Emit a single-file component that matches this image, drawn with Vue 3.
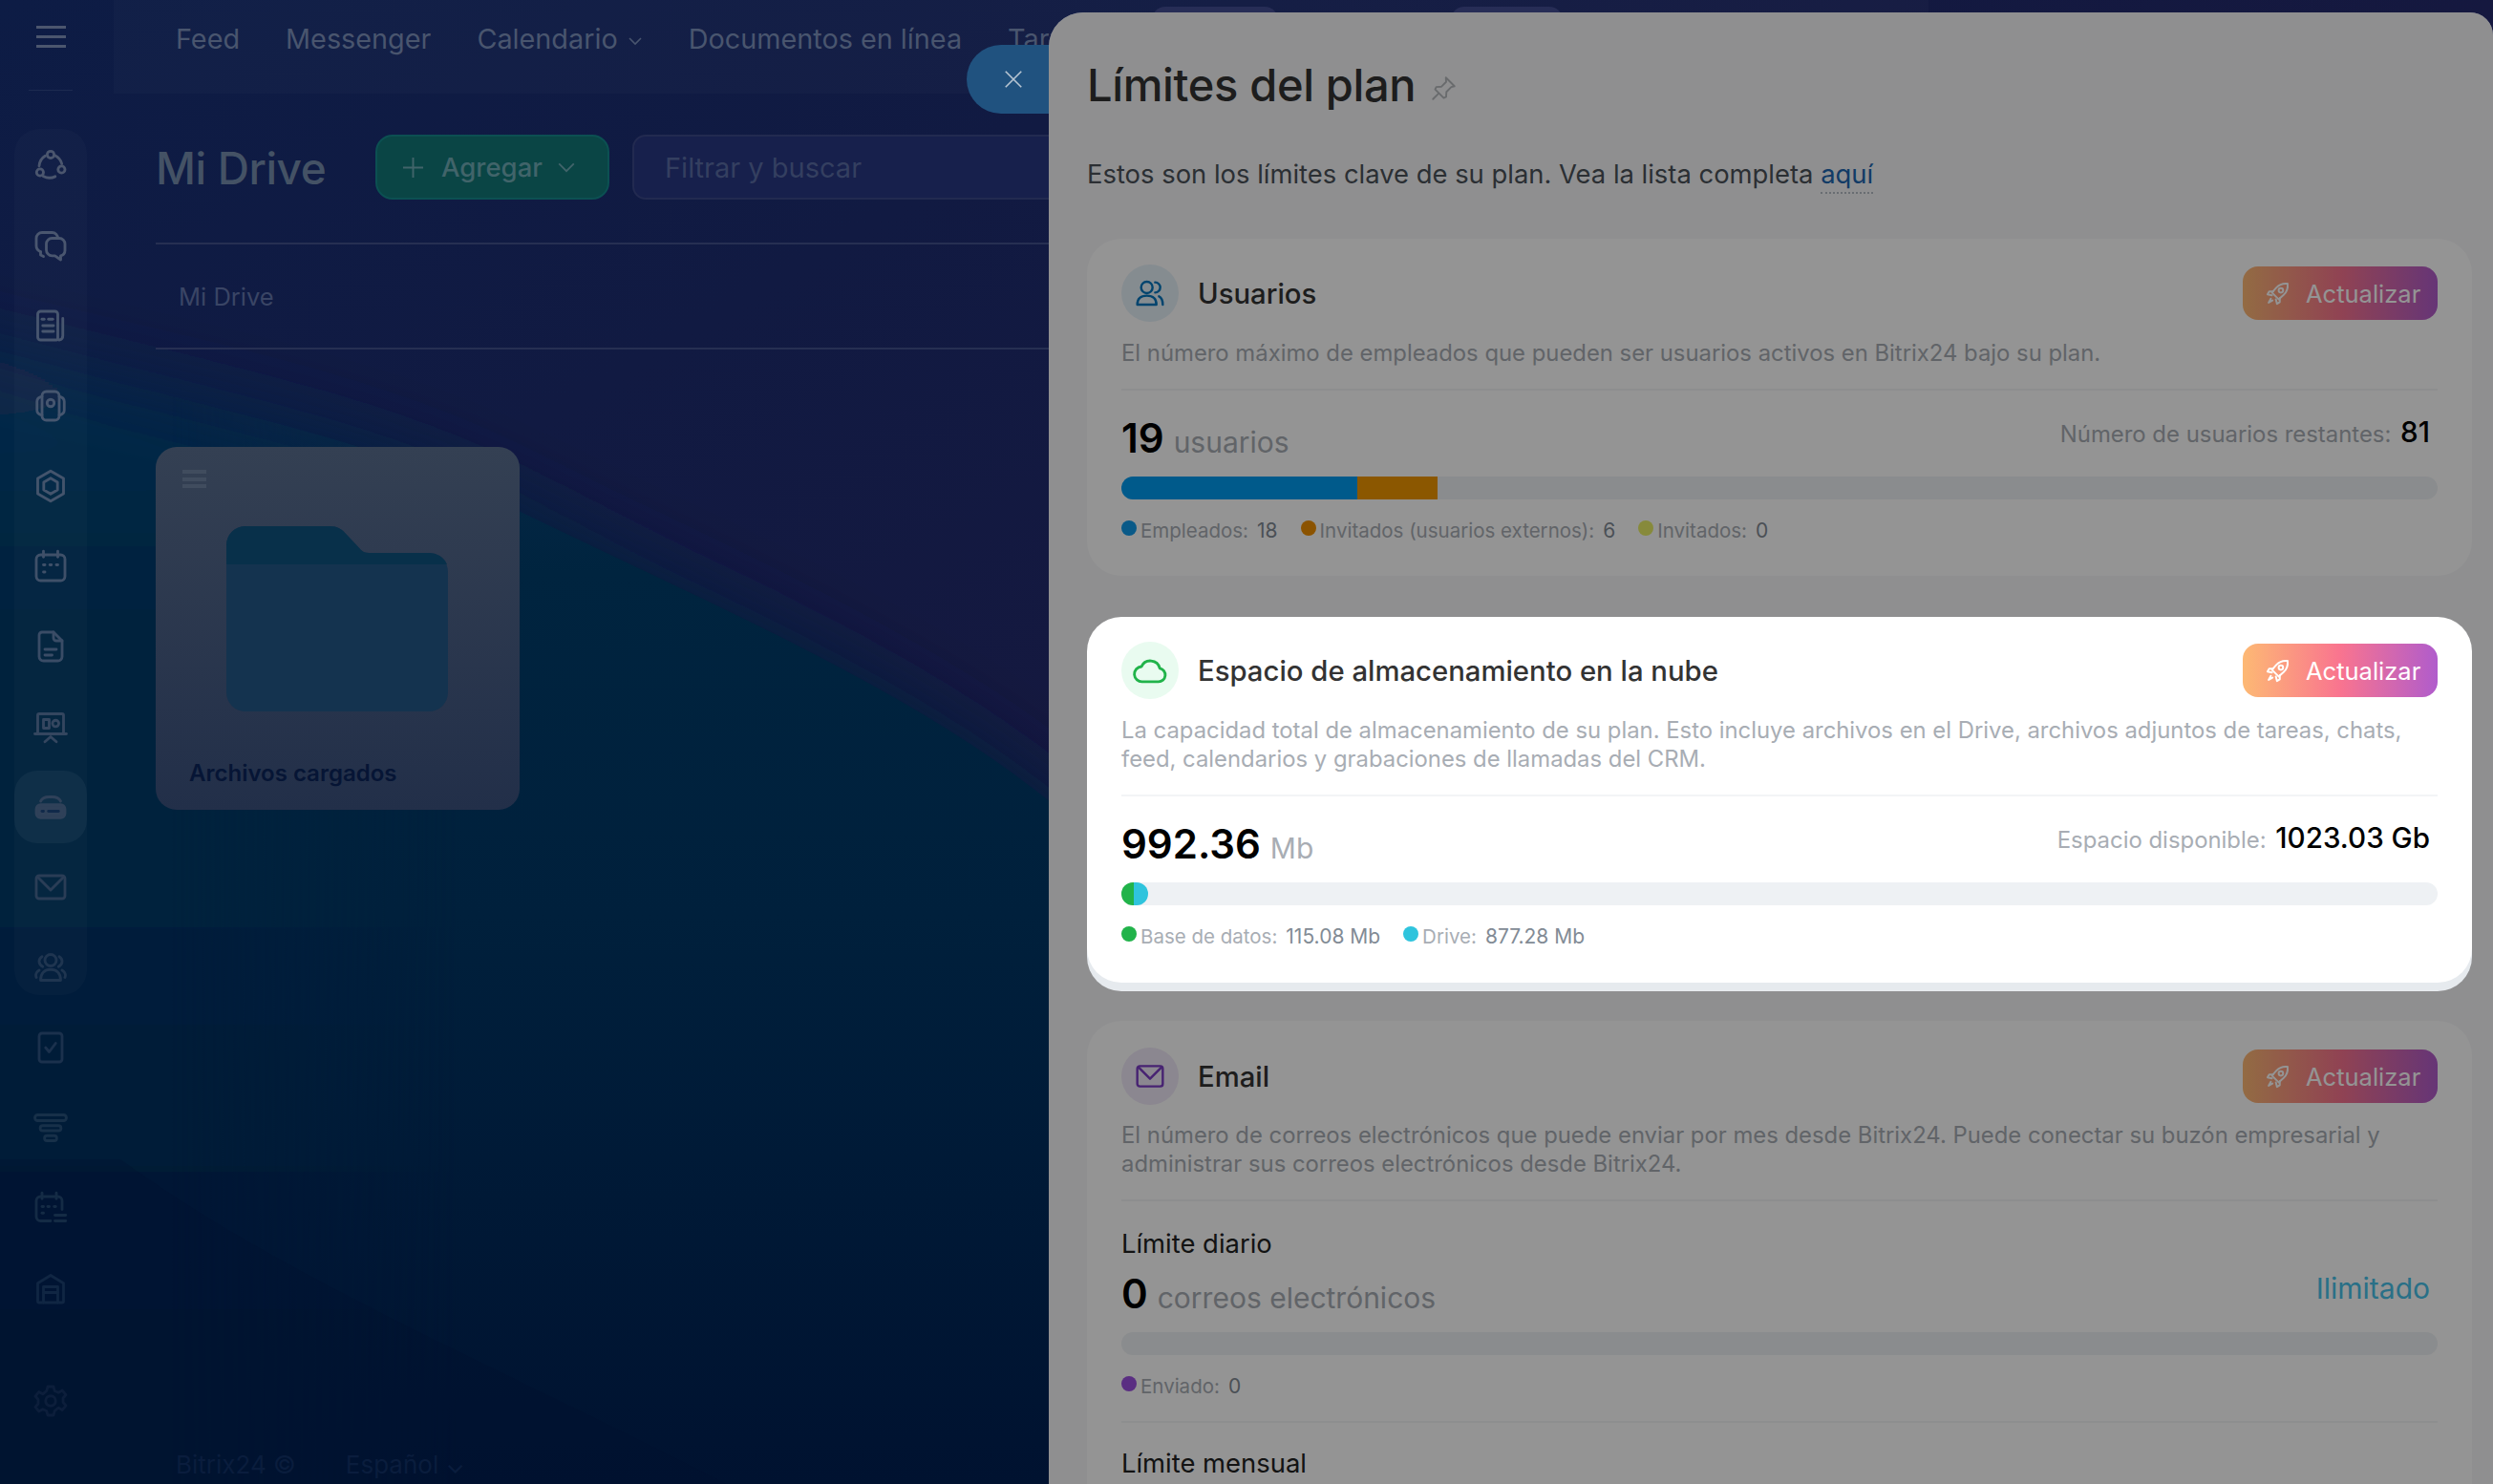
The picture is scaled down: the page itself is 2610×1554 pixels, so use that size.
<script setup>
const railTop = [
  ['M8.2 5.5A9 9 0 0 0 4 12.5', 'M6.8 19.6a9 9 0 0 0 8.4.3', 'M19.8 11A9 9 0 0 0 15 5.2', 'M12 2.2a2.4 2.4 0 1 0 0 4.8 2.4 2.4 0 0 0 0-4.8z', 'M4.6 14.6a2.4 2.4 0 1 0 0 4.8 2.4 2.4 0 0 0 0-4.8z', 'M19.6 12.6a2.4 2.4 0 1 0 0 4.8 2.4 2.4 0 0 0 0-4.8z'],
  ['M5 16.5c-1.6-.8-3-2-3-4.2V7a4 4 0 0 1 4-4h7a4 4 0 0 1 4 4', 'M5 16.5v2.2l2 1', 'M13 7h5a4 4 0 0 1 4 4v4.5a4 4 0 0 1-3 3.8V22l-4-2.8h-2a4 4 0 0 1-4-4V11a4 4 0 0 1 4-4z'],
  ['M5 2h10a2 2 0 0 1 2 2v17a1 1 0 0 1-1 1H5a2 2 0 0 1-2-2V4a2 2 0 0 1 2-2z', 'M20.5 7v12a3 3 0 0 1-2.500 3', 'M6 7.500h1.500', 'M10.500 7.500h3', 'M6.500 12h7.500', 'M6.500 16h7.500'],
  ['M9 2h6a3 3 0 0 1 3 3v14a3 3 0 0 1-3 3H9a3 3 0 0 1-3-3V5a3 3 0 0 1 3-3z', 'M12 7.500a2.500 2.500 0 1 0 0 5 2.500 2.500 0 0 0 0-5z', 'M6 5.500c-2 .4-3.500 1.500-3.500 3.500v6c0 2 1.500 3.100 3.500 3.500', 'M18 5.500c2 .4 3.500 1.500 3.500 3.500v6c0 2-1.500 3.100-3.500 3.500'],
  ['M12 1.500l9 5.200v10.600l-9 5.200-9-5.200V6.700z', 'M12 6.500l4.800 2.800v5.400L12 17.500l-4.800-2.800V9.300z'],
  ['M5 4h14a3 3 0 0 1 3 3v12a3 3 0 0 1-3 3H5a3 3 0 0 1-3-3V7a3 3 0 0 1 3-3z', 'M7 1.500v4', 'M17 1.500v4', 'M7 11h1', 'M11.500 11h1', 'M16 11h1', 'M7 16h1'],
  ['M6 2h8l6 6v11a3 3 0 0 1-3 3H7a3 3 0 0 1-3-3V4a2 2 0 0 1 2-2z', 'M14 2v4a2 2 0 0 0 2 2h4', 'M8 14h8', 'M8 18h5'],
  ['M4 3h16a1 1 0 0 1 1 1v13H3V4a1 1 0 0 1 1-1z', 'M1 17h22', 'M7 7h4v6H7z', 'M15.500 7.500a2.200 2.200 0 1 0 0 4.400 2.200 2.200 0 0 0 0-4.400z', 'M8 22.500l4-3.500 4 3.500'],
  ['M5 8c1-2 3-3 6-3h2c3 0 5 1 6 3', 'M5 10.500h14a3 3 0 0 1 3 3v3a3 3 0 0 1-3 3H5a3 3 0 0 1-3-3v-3a3 3 0 0 1 3-3z', 'M6 15h1', 'M10.500 15h7'],
  ['M4 4h16a2 2 0 0 1 2 2v12a2 2 0 0 1-2 2H4a2 2 0 0 1-2-2V6a2 2 0 0 1 2-2z', 'M3 5l9 9 9-9'],
  ['M12 3a4 4 0 1 0 0 8 4 4 0 0 0 0-8z', 'M5 21c0-5 3-7.500 7-7.500s7 2.500 7 7.500z', 'M6 4.500c-2.500 1.500-3 5 .5 7', 'M18 4.500c2.500 1.500 3 5-.5 7', 'M2 19c-.8-2 .2-4 2-5', 'M22 19c.8-2-.2-4-2-5']
]
const railBottom = [
  ['M6 2h12a2 2 0 0 1 2 2v16a2 2 0 0 1-2 2H6a2 2 0 0 1-2-2V4a2 2 0 0 1 2-2z', 'M8.500 12l2.500 3 4.500-6'],
  ['M3 3h18a1.500 1.500 0 0 1 0 4H3a1.500 1.500 0 0 1 0-4z', 'M6.500 10.500h11a1.500 1.500 0 0 1 0 3.500h-11a1.500 1.500 0 0 1 0-3.500z', 'M9.500 17.500h5a1.700 1.700 0 0 1 0 3.500h-5a1.700 1.700 0 0 1 0-3.500z'],
  ['M12 21H5a3 3 0 0 1-3-3V7a3 3 0 0 1 3-3h12a3 3 0 0 1 3 3v6', 'M6 1.500v4', 'M16 1.500v4', 'M6 11h1', 'M10 11h1', 'M14.500 11h1', 'M6 15.500h1', 'M15 17h7.500', 'M15 21h7.500'],
  ['M3 21V8.500L12 3l9 5.500V21a1 1 0 0 1-1 1H4a1 1 0 0 1-1-1z', 'M7 22V11h10v11', 'M7 15h10'],
  ['M10 2h4l.8 3 2.700 1.200 2.700-1.500 2.500 3-2 2.300v3l2 2.300-2.500 3-2.700-1.500L14.800 19 14 22h-4l-.8-3-2.700-1.200-2.700 1.500-2.500-3 2-2.300v-3l-2-2.300 2.500-3 2.700 1.500L9.200 5z', 'M12 8.500a3.500 3.500 0 1 0 0 7 3.500 3.500 0 0 0 0-7z']
]
const railColor = (i) => {
  const stops = ['#4b566e', '#4a566f', '#48566f', '#46566f', '#44546c', '#3f5069', '#3a4c66', '#34465f', '#2f4159', '#2a3d56', '#1f3550', '#1b314d', '#173049', '#142b45', '#102643', '#0c1e3b']
  return { color: stops[i] }
}
const driveFill = (iconIndex, pathIndex) => (iconIndex === 8 && pathIndex === 1 ? 'currentColor' : 'none')
const driveStroke = (iconIndex, pathIndex) => (iconIndex === 8 && pathIndex > 1 ? '#10294a' : 'currentColor')
const rocket = ['M20.500 3.500c-4-.5-7.500.8-10 3.500L6.500 11.500l6 6 4.500-4c2.700-2.500 4-6 3.500-10z', 'M14.500 7.500a2 2 0 1 0 0 4 2 2 0 0 0 0-4z', 'M7.500 10.500H4L2.500 13l4 1', 'M13.500 16.500v3.500L11 21.500l-1-4', 'M5.500 17l-2 3.500 3.500-2']
const cards = [
  {
    title: 'Usuarios', tint: 'tint-blue', iconPaths: ['M9.500 3a4.500 4.500 0 1 0 0 9 4.500 4.500 0 0 0 0-9z', 'M2 21c0-5 3-7 7.500-7s7.500 2 7.500 7z', 'M16 3.500a4 4 0 0 1 0 8', 'M19 14.500c2 1 3 3 3 6.500'],
    desc: 'El número máximo de empleados que pueden ser usuarios activos en Bitrix24 bajo su plan.',
    sections: [{ value: '19', unit: 'usuarios', rightLabel: 'Número de usuarios restantes:', rightValue: '81', segs: [{ w: 247, c: '#009bf0' }, { w: 84, c: '#f09600' }], legend: [{ c: '#129bea', l: 'Empleados:', v: '18' }, { c: '#f09000', l: 'Invitados (usuarios externos):', v: '6' }, { c: '#e8ee66', l: 'Invitados:', v: '0' }] }]
  },
  {
    title: 'Espacio de almacenamiento en la nube', tint: 'tint-green', highlight: true, iconPaths: ['M7 19.500h10.500a4.500 4.500 0 0 0 1-8.900A6.500 6.500 0 0 0 6.300 9.500 5 5 0 0 0 7 19.500z'],
    desc: 'La capacidad total de almacenamiento de su plan. Esto incluye archivos en el Drive, archivos adjuntos de tareas, chats, feed, calendarios y grabaciones de llamadas del CRM.',
    sections: [{ value: '992.36', unit: 'Mb', rightLabel: 'Espacio disponible:', rightValue: '1023.03 Gb', segs: [{ w: 13, c: '#21b34a' }, { w: 15, c: '#2fc4dd' }], legend: [{ c: '#21b34a', l: 'Base de datos:', v: '115.08 Mb' }, { c: '#2fc4dd', l: 'Drive:', v: '877.28 Mb' }] }]
  },
  {
    title: 'Email', tint: 'tint-purple', iconPaths: ['M4 4h16a2 2 0 0 1 2 2v12a2 2 0 0 1-2 2H4a2 2 0 0 1-2-2V6a2 2 0 0 1 2-2z', 'M3 5l9 9 9-9'],
    desc: 'El número de correos electrónicos que puede enviar por mes desde Bitrix24. Puede conectar su buzón empresarial y administrar sus correos electrónicos desde Bitrix24.',
    sections: [
      { heading: 'Límite diario', value: '0', unit: 'correos electrónicos', unlimited: 'Ilimitado', segs: [], legend: [{ c: '#9b50e0', l: 'Enviado:', v: '0' }] },
      { heading: 'Límite mensual', segs: null, legend: [] }
    ]
  }
]
</script>

<template>
  <div class="page">
    <svg class="wallpaper" viewBox="0 0 2610 1554" preserveAspectRatio="none" aria-hidden="true">
      <defs>
        <linearGradient id="upper" x1="0" y1="0" x2="1" y2="1">
          <stop offset="0" stop-color="#0d1c45" />
          <stop offset="0.5" stop-color="#15183f" />
          <stop offset="1" stop-color="#1c173d" />
        </linearGradient>
        <linearGradient id="lower" gradientUnits="userSpaceOnUse" x1="0" y1="360" x2="0" y2="1554">
          <stop offset="0" stop-color="#0a2a4c" />
          <stop offset="0.2" stop-color="#00243f" />
          <stop offset="0.5" stop-color="#00203c" />
          <stop offset="1" stop-color="#001230" />
        </linearGradient>
        <linearGradient id="fadeIn" gradientUnits="userSpaceOnUse" x1="180" y1="0" x2="480" y2="0">
          <stop offset="0" stop-color="#000" />
          <stop offset="1" stop-color="#fff" />
        </linearGradient>
        <mask id="crisp"><rect width="2610" height="1554" fill="url(#fadeIn)" /></mask>
        <filter id="soft" x="-10%" y="-10%" width="120%" height="120%"><feGaussianBlur stdDeviation="38" /></filter>
      </defs>
      <rect width="2610" height="1554" fill="url(#upper)" />
      <path d="M-100 350C180 420 380 450 547 537C760 640 950 720 1100 840L1300 1000V1700H-100z" fill="url(#lower)" filter="url(#soft)" />
      <path d="M-100 350C180 420 380 450 547 537C760 640 950 720 1100 840L1300 1000V1700H-100z" fill="url(#lower)" mask="url(#crisp)" />
      <path d="M126 1214C300 1340 500 1420 760 1554H0V1214z" fill="#001230" opacity=".3" />
    </svg>

    <div class="shell">
      <aside class="rail">
        <div class="burger"><i></i><i></i><i></i></div>
        <div class="rail-sep"></div>
        <div class="rail-pill">
          <div v-for="(paths, i) in railTop" :key="i" class="rail-item" :class="{ active: i === 8 }" :style="railColor(i)">
            <svg class="rail-icon" viewBox="0 0 24 24" fill="none" stroke="currentColor" stroke-width="1.900" stroke-linecap="round" stroke-linejoin="round">
              <path v-for="(d, k) in paths" :key="d" :d="d" :fill="driveFill(i, k)" :stroke="driveStroke(i, k)" />
            </svg>
          </div>
        </div>
        <div class="rail-rest">
          <div v-for="(paths, i) in railBottom" :key="i" class="rail-item" :class="{ gear: i === 4 }" :style="railColor(i + 11)">
            <svg class="rail-icon" viewBox="0 0 24 24" fill="none" stroke="currentColor" stroke-width="1.900" stroke-linecap="round" stroke-linejoin="round">
              <path v-for="d in paths" :key="d" :d="d" />
            </svg>
          </div>
        </div>
      </aside>

      <main class="main">
        <nav class="topnav">
          <span>Feed</span>
          <span>Messenger</span>
          <span class="with-caret">Calendario
            <svg class="caret" viewBox="0 0 16 10" fill="none" stroke="currentColor" stroke-width="1.600"><path d="M2 2l6 6 6-6" /></svg>
          </span>
          <span>Documentos en línea</span>
          <span>Tareas</span>
        </nav>

        <section class="content">
          <div class="titlebar">
            <h1 class="drive-title">Mi Drive</h1>
            <div class="add-btn">
              <svg class="add-plus" viewBox="0 0 24 24" fill="none" stroke="currentColor" stroke-width="2"><path d="M12 1v22M1 12h22" /></svg>
              <span>Agregar</span>
              <svg class="add-caret" viewBox="0 0 20 12" fill="none" stroke="currentColor" stroke-width="2"><path d="M1.500 1.500L10 10l8.500-8.500" /></svg>
            </div>
            <div class="search">Filtrar y buscar</div>
          </div>
          <div class="crumbs">Mi Drive</div>
          <div class="folder-card">
            <div class="mini-burger"><i></i><i></i><i></i></div>
            <svg class="folder" viewBox="0 0 232 194" aria-hidden="true">
              <path d="M0 40V20A20 20 0 0 1 20 0h88c8 0 13 3 18 9l15 16c2 2 4 3 8 3h63a20 20 0 0 1 20 20V174a20 20 0 0 1-20 20H20A20 20 0 0 1 0 174z" fill="#14334f" />
              <path d="M0 40V20A20 20 0 0 1 20 0h88c8 0 13 3 18 9l15 16c2 2 4 3 8 3h63a20 20 0 0 1 19 12H0z" fill="#08304a" />
            </svg>
            <div class="folder-name">Archivos cargados</div>
          </div>
          <div class="legal"><span>Bitrix24 ©</span><span>Español ⌄</span></div>
        </section>
      </main>
    </div>

    <div class="tab-ghost first"></div>
    <div class="tab-ghost second"></div>

    <button class="close" aria-label="Cerrar">
      <svg viewBox="0 0 24 24" fill="none" stroke="currentColor" stroke-width="1.800"><path d="M3 3l18 18M21 3L3 21" /></svg>
    </button>

    <aside class="panel">
      <div class="panel-head">
        <h2 class="panel-title">Límites del plan</h2>
        <svg class="pin" viewBox="0 0 24 24" fill="none" stroke="currentColor" stroke-width="1.700" stroke-linejoin="round" stroke-linecap="round"><path d="M14 2l8 8-3 .8-4.500 4.500-.3 4.700-2.200 1-8-8 1-2.200 4.700-.3 4.500-4.500z" /><path d="M7 17l-5 5" /></svg>
      </div>
      <p class="panel-sub">Estos son los límites clave de su plan. Vea la lista completa <a class="here">aquí</a></p>

      <div class="cards">
        <article v-for="card in cards" :key="card.title" class="card" :class="[{ highlight: card.highlight }, card.tint + '-card']">
          <header class="card-head">
            <span class="badge" :class="card.tint">
              <svg viewBox="0 0 24 24" fill="none" stroke="currentColor" stroke-width="1.800" stroke-linecap="round" stroke-linejoin="round"><path v-for="d in card.iconPaths" :key="d" :d="d" /></svg>
            </span>
            <h3 class="card-title">{{ card.title }}</h3>
            <div class="upgrade">
              <svg viewBox="0 0 24 24" fill="none" stroke="currentColor" stroke-width="1.700" stroke-linecap="round" stroke-linejoin="round"><path v-for="d in rocket" :key="d" :d="d" /></svg>
              <span>Actualizar</span>
            </div>
          </header>
          <p class="card-desc">{{ card.desc }}</p>
          <section v-for="s in card.sections" :key="s.heading || s.value" class="metric">
            <div v-if="s.heading" class="metric-heading">{{ s.heading }}</div>
            <template v-if="s.segs">
              <div class="metric-row">
                <div class="metric-main"><strong>{{ s.value }}</strong><span>{{ s.unit }}</span></div>
                <div v-if="s.rightLabel" class="metric-side"><span>{{ s.rightLabel }}</span> <b>{{ s.rightValue }}</b></div>
                <div v-else class="metric-unlimited">{{ s.unlimited }}</div>
              </div>
              <div class="track">
                <i v-for="seg in s.segs" :key="seg.c" :style="{ width: seg.w + 'px', background: seg.c }"></i>
              </div>
              <div class="legend">
                <div v-for="item in s.legend" :key="item.l" class="legend-item">
                  <i :style="{ background: item.c }"></i>
                  <span>{{ item.l }}</span>
                  <b>{{ item.v }}</b>
                </div>
              </div>
            </template>
          </section>
        </article>
      </div>
      <div class="dim"></div>
    </aside>
  </div>
</template>

<style>
html, body { margin: 0; background: #00122f; }
</style>

<style scoped>
.page {
  position: relative;
  width: 2610px;
  height: 1554px;
  overflow: hidden;
  font-family: Inter, "Noto Sans", sans-serif;
}
.wallpaper { position: absolute; inset: 0; width: 100%; height: 100%; }
.shell { position: relative; display: flex; height: 100%; }

.rail { width: 119px; flex: none; display: flex; flex-direction: column; align-items: center; padding: 27px 13px 0 0; box-sizing: border-box; }
.burger { width: 31px; height: 23px; display: flex; flex-direction: column; justify-content: space-between; }
.burger i { height: 3px; background: #4b566e; }
.rail-sep { width: 46px; height: 1px; margin: 44px 0 39px; background: #1c2a50; }
.rail-pill { width: 76px; display: flex; flex-direction: column; gap: 8px; border-radius: 26px; background: rgba(255,255,255,.018); height: 907px; margin-top: 1px; }
.rail-rest { width: 76px; display: flex; flex-direction: column; gap: 8px; margin-top: 17px; }
.rail-item { width: 76px; height: 76px; flex: none; display: flex; align-items: center; justify-content: center; border-radius: 24px; }
.rail-item.active { background: rgba(255,255,255,.045); }
.rail-item.gear { margin-top: 34px; }
.rail-icon { width: 36px; height: 36px; }

.main { width: 1900px; flex: none; display: flex; flex-direction: column; }
.topnav { height: 98px; box-sizing: border-box; padding: 23px 0 0 65px; display: flex; align-items: flex-start; gap: 48px; color: #49556e; font-size: 28.800px; line-height: 36px; background: rgba(255,255,255,.018); }
.with-caret { display: inline-flex; align-items: center; gap: 10px; }
.caret { width: 16px; height: 10px; margin-top: 4px; }

.content { position: relative; flex: 1; padding: 43px 0 0 44px; }
.titlebar { display: flex; align-items: center; padding-bottom: 45px; border-bottom: 2px solid #262f52; }
.drive-title { margin: 2px 50px 0 0; width: 180px; font-size: 46px; line-height: 66px; font-weight: 500; color: #445265; white-space: nowrap; letter-spacing: -.4px; }
.add-btn { width: 245px; height: 68px; box-sizing: border-box; border: 2px solid #0c5052; border-radius: 18px; background: #0a4545; color: #41646a; display: flex; align-items: center; padding-left: 26px; font-size: 27.500px; font-weight: 500; }
.add-plus { width: 23px; height: 23px; margin-right: 18px; }
.add-caret { width: 20px; height: 11px; margin-left: 15px; }
.search { width: 900px; height: 68px; box-sizing: border-box; margin-left: 24px; border: 2px solid #222a50; border-radius: 14px; background: #17204c; color: #343f60; font-size: 29px; line-height: 66px; padding-left: 32px; }
.crumbs { height: 108px; line-height: 110px; padding-left: 24px; font-size: 25.500px; color: #3a4565; border-bottom: 2px solid #262f52; }
.folder-card { position: relative; width: 381px; height: 380px; margin-top: 102px; box-sizing: border-box; border-radius: 22px; background: linear-gradient(#344053, #222f49); }
.mini-burger { position: absolute; left: 28px; top: 24px; width: 25px; height: 19px; display: flex; flex-direction: column; justify-content: space-between; }
.mini-burger i { height: 4px; background: #404c5e; }
.folder { position: absolute; left: 74px; top: 83px; width: 232px; height: 194px; }
.folder-name { position: absolute; left: 35px; top: 326px; font-size: 24px; line-height: 32px; font-weight: 600; color: #061535; white-space: nowrap; }
.legal { position: absolute; left: 65px; top: 1420px; display: flex; gap: 52px; font-size: 26px; color: #0a1d3d; }

.tab-ghost { position: absolute; top: 7px; height: 20px; border-radius: 14px 14px 0 0; background: #272d56; }
.tab-ghost.first { left: 1206px; width: 132px; }
.tab-ghost.second { left: 1519px; width: 117px; }

.close { position: absolute; left: 1012px; top: 47px; width: 110px; height: 72px; padding: 0 0 0 38px; border: 0; border-radius: 36px 0 0 36px; background: #20527f; color: #b7c5d2; display: flex; align-items: center; }
.close svg { width: 22px; height: 22px; }

.panel { position: absolute; left: 1098px; top: 13px; right: 0; bottom: 0; overflow: hidden; border-radius: 36px 24px 0 0; background: #f6f7f9; padding: 0 22px 0 40px; box-sizing: border-box; }
.dim { position: absolute; inset: 0; z-index: 1; background: rgba(0,0,0,.42); }
.panel-head { display: flex; align-items: center; gap: 16px; padding-top: 48px; height: 56px; }
.panel-title { margin: 0; font-size: 47px; line-height: 56px; font-weight: 500; color: #333; white-space: nowrap; letter-spacing: -.35px; }
.pin { width: 27px; height: 27px; margin-top: 6px; color: #b5b8bc; }
.panel-sub { margin: 45px 0 0; font-size: 27.400px; line-height: 40px; color: #4b5259; }
.here { color: #2066b0; border-bottom: 2px dotted #b5bcc4; padding-bottom: 2px; }

.cards { display: flex; flex-direction: column; gap: 43px; margin-top: 48px; }
.card { background: #fff; border-radius: 36px; padding: 27px 36px 35px; box-sizing: border-box; }
.card.highlight { position: relative; z-index: 2; margin-bottom: -3px; padding-top: 26px; padding-bottom: 36px; box-shadow: 0 9px 0 #e6eaee; }
.tint-purple-card { padding-top: 28px; }
.tint-purple-card .card-desc { margin-top: 17px; }
.card-head { display: flex; align-items: center; }
.badge { width: 60px; height: 60px; flex: none; border-radius: 50%; display: flex; align-items: center; justify-content: center; margin-right: 20px; }
.badge svg { width: 32px; height: 32px; }
.tint-blue { background: #e6f1f9; color: #0075bd; }
.tint-green { background: #e9fbf0; color: #21b34a; }
.tint-green svg { width: 38px; height: 38px; }
.tint-purple { background: #f0e8f8; color: #7a3cc4; }
.card-title { margin: 0; flex: 1; font-size: 29.300px; line-height: 40px; font-weight: 500; color: #333; padding-top: 1px; }
.upgrade { width: 204px; height: 56px; box-sizing: border-box; border-radius: 16px; background: linear-gradient(90deg, #fdb974 0%, #f9748f 50%, #b05ccc 100%); color: #fff; display: flex; align-items: center; padding-left: 23px; font-size: 25.500px; }
.upgrade svg { width: 28px; height: 28px; margin-right: 15px; }
.card-desc { margin: 18px 0 22px; font-size: 23.850px; line-height: 30px; color: #a8adb4; }
.metric { border-top: 2px solid #f3f4f6; padding-top: 26px; }
.metric + .metric { margin-top: 24px; padding-top: 24px; }
.metric-heading { font-size: 27.400px; line-height: 36px; color: #222; margin-bottom: 11px; }
.metric-row { display: flex; justify-content: space-between; padding-right: 8px; height: 48px; }
.metric-main { display: flex; align-items: baseline; gap: 10px; line-height: 48px; }
.metric-main strong { font-size: 42px; font-weight: 600; color: #000; }
.metric-main span { font-size: 30px; color: #a8adb4; }
.metric-side { line-height: 34px; font-size: 23.900px; color: #a8adb4; }
.metric-side b { font-size: 29.600px; font-weight: 500; color: #000; margin-left: 3px; }
.metric-unlimited { font-size: 30px; line-height: 36px; color: #48c1e8; }
.track { display: flex; height: 24px; margin-top: 16px; border-radius: 12px; overflow: hidden; background: #eef1f4; }
.track i { display: block; height: 100%; }
.highlight .track i:last-child { border-radius: 0 12px 12px 0; }
.legend { display: flex; gap: 24px; margin-top: 21px; height: 24px; font-size: 20.500px; line-height: 24px; color: #a8adb4; }
.legend-item { display: flex; align-items: center; gap: 4px; white-space: nowrap; }
.legend-item i { width: 16px; height: 16px; border-radius: 50%; margin-top: -6px; }
.legend-item b { font-weight: 400; font-size: 21px; color: #828b95; margin-left: 5px; }
</style>
